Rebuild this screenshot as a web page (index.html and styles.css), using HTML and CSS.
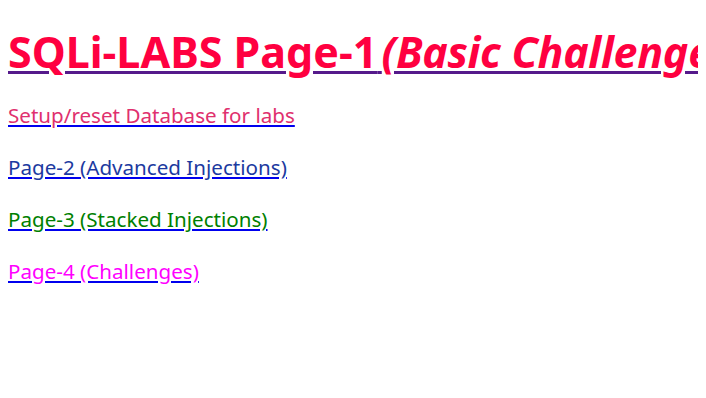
FILE: index.html
```html
<!DOCTYPE html>
<html>
<head>
<meta charset="utf-8">
<title>SQLi-LABS</title>
<link rel="stylesheet" href="styles.css">
</head>
<body>
<h1 class="title"><a class="title-link" href="#top"><span class="title-main">SQLi-LABS Page-1</span>&#8202;<span class="title-sub">(Basic Challenges)</span></a></h1>
<p class="row"><a class="lnk lnk-setup" href="#setup">Setup/reset Database for labs</a></p>
<p class="row"><a class="lnk lnk-p2" href="#p2">Page-2 (Advanced Injections)</a></p>
<p class="row"><a class="lnk lnk-p3" href="#p3">Page-3 (Stacked Injections)</a></p>
<p class="row"><a class="lnk lnk-p4" href="#p4">Page-4 (Challenges)</a></p>
</body>
</html>
```
FILE: styles.css
```css
html, body {
  background: #ffffff;
}
body {
  margin: 8px;
  font-family: "Noto Sans", "Open Sans", sans-serif;
  font-size: 20.6px;
  overflow: hidden;
  white-space: nowrap;
}
.title {
  font-size: 43px;
  font-weight: bold;
  margin: 16px 0 20px;
  line-height: 1.3;
  overflow: hidden;
}
.title-link {
  color: #551a8b;
  text-decoration: underline;
  text-decoration-thickness: 3px;
  text-underline-offset: 3px;
}
.title-main {
  color: #ff0040;
}
.title-sub {
  color: #ff0040;
  font-style: italic;
  letter-spacing: -0.3px;
}
.row {
  margin: 0 0 22px;
  line-height: 30px;
}
.lnk {
  text-decoration: underline;
  text-decoration-color: #0000ee;
}
.lnk-setup { color: #e0306e; }
.lnk-p2 { color: #1c3aa0; }
.lnk-p3 { color: #008000; }
.lnk-p4 { color: #ff00ff; }
```
